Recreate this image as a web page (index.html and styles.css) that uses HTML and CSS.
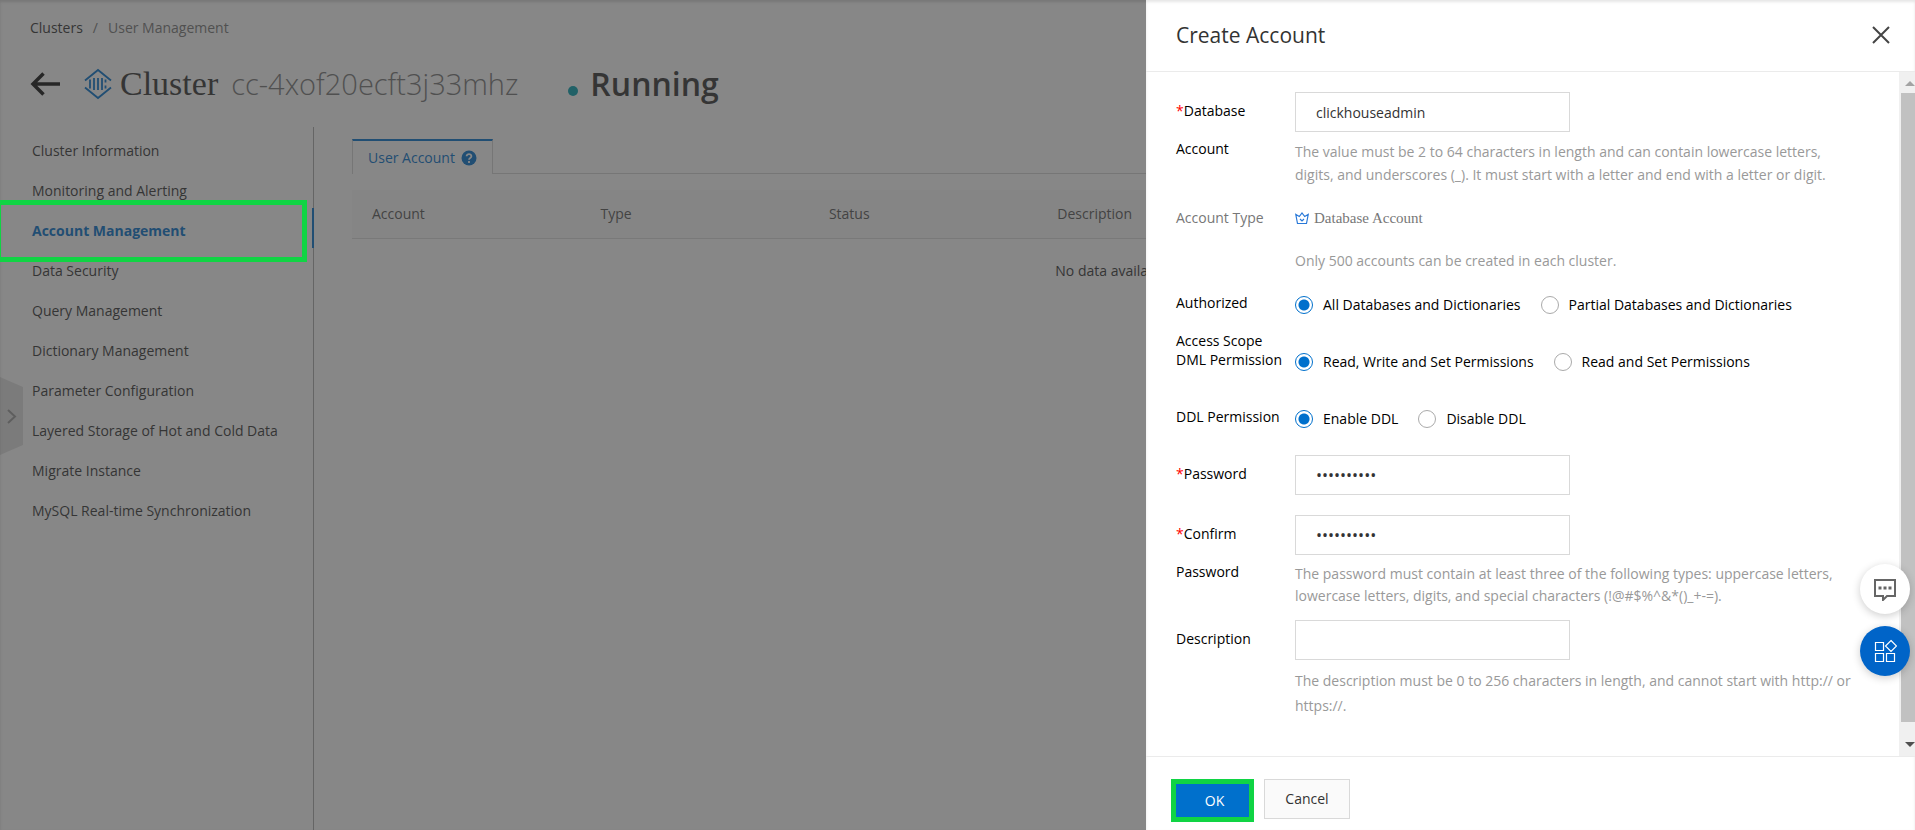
FILE: index.html
```
<!DOCTYPE html>
<html lang="en">
<head>
<meta charset="utf-8">
<title>Create Account</title>
<link rel="stylesheet" href="styles.css">
</head>
<body>
<div class="page">
  <nav class="breadcrumb" aria-label="Breadcrumb">
    <a href="#">Clusters</a><span class="sep">/</span><span class="current">User Management</span>
  </nav>
  <header class="title-bar">
    <a class="back" href="#" aria-label="Back">
      <svg width="30" height="24" viewBox="0 0 30 24"><path d="M30 12H3M13.500 1.500 3 12l10.500 10.500" fill="none" stroke="#111" stroke-width="3.500"/></svg>
    </a>
    <svg class="product" width="28" height="32" viewBox="0 0 28 32" fill="none" stroke="#0070cc" stroke-width="1.800"><path d="M1 12.500 14 2l13 10.500M1 19.500 14 30l13-10.500M6 11.500v9M10 10v12M14 10v12M18 10v12M21.500 11.500v3M21.500 17.500v3"/></svg>
    <span class="kind">Cluster</span>
    <span class="cluster-id">cc-4xof20ecft3j33mhz</span>
    <span class="dot"></span>
    <span class="status">Running</span>
  </header>
  <div class="columns">
    <nav class="side" aria-label="Cluster">
      <ul>
        <li><a href="#">Cluster Information</a></li>
        <li><a href="#">Monitoring and Alerting</a></li>
        <li class="active"><a href="#">Account Management</a></li>
        <li><a href="#">Data Security</a></li>
        <li><a href="#">Query Management</a></li>
        <li><a href="#">Dictionary Management</a></li>
        <li><a href="#">Parameter Configuration</a></li>
        <li><a href="#">Layered Storage of Hot and Cold Data</a></li>
        <li><a href="#">Migrate Instance</a></li>
        <li><a href="#">MySQL Real-time Synchronization</a></li>
      </ul>
    </nav>
    <main class="main">
      <div class="tabs">
        <a class="tab" href="#">User Account
          <svg width="16" height="16" viewBox="0 0 16 16"><circle cx="8" cy="8" r="7.500" fill="#0070cc"/><path d="M5.600 6.300C5.600 3.400 10.400 3.400 10.400 6.300 10.400 8 8 7.900 8 9.700M8 10.900v2" fill="none" stroke="#fff" stroke-width="1.800"/></svg>
        </a>
      </div>
      <table class="accounts">
        <thead><tr><th>Account</th><th>Type</th><th>Status</th><th>Description</th><td></td></tr></thead>
        <tbody><tr><td class="empty" colspan="5">No data available.</td></tr></tbody>
      </table>
    </main>
  </div>
  <button class="expand" type="button" aria-label="Expand menu">
    <svg width="23" height="78" viewBox="0 0 23 78"><path d="M0 0 23 10V68L0 78z" fill="#e2e2e2"/><path d="M8 33l7 6.500L8 46" fill="none" stroke="#999" stroke-width="2"/></svg>
  </button>
</div>
<div class="overlay"></div>
<form class="drawer" aria-label="Create Account">
  <div class="drawer-head">
    <h2>Create Account</h2>
    <button class="close" type="button" aria-label="Close">
      <svg width="18" height="18" viewBox="0 0 18 18"><path d="M1 1l16 16M17 1 1 17" stroke="#444" stroke-width="2"/></svg>
    </button>
  </div>
  <div class="drawer-body">
    <div class="fields">
      <div class="row">
        <label for="account"><i>*</i>Database<br>Account</label>
        <div>
          <input class="text" id="account" type="text" value="clickhouseadmin">
          <p class="help">The value must be 2 to 64 characters in length and can contain lowercase letters,<br>digits, and underscores (_). It must start with a letter and end with a letter or digit.</p>
        </div>
      </div>
      <div class="row type-row">
        <span class="muted">Account Type</span>
        <div>
          <span class="type"><svg width="14" height="13" viewBox="0 0 14 13" fill="none" stroke="#2878d8" stroke-width="1.200"><path d="M.8 2.500 2.500 11.500h9L13.200 2.500 9.700 4.500 7 1 4.300 4.500zM5 7l2 2 2-2"/></svg>Database Account</span>
          <p class="help">Only 500 accounts can be created in each cluster.</p>
        </div>
      </div>
      <div class="row choice" role="radiogroup" aria-labelledby="scope">
        <span id="scope">Authorized<br>Access Scope</span>
        <div class="options">
          <label><input type="radio" name="scope" checked>All Databases and Dictionaries</label>
          <label><input type="radio" name="scope">Partial Databases and Dictionaries</label>
        </div>
      </div>
      <div class="row choice" role="radiogroup" aria-labelledby="dml">
        <span id="dml">DML Permission</span>
        <div class="options">
          <label><input type="radio" name="dml" checked>Read, Write and Set Permissions</label>
          <label><input type="radio" name="dml">Read and Set Permissions</label>
        </div>
      </div>
      <div class="row choice" role="radiogroup" aria-labelledby="ddl">
        <span id="ddl">DDL Permission</span>
        <div class="options">
          <label><input type="radio" name="ddl" checked>Enable DDL</label>
          <label><input type="radio" name="ddl">Disable DDL</label>
        </div>
      </div>
      <div class="row password-row">
        <label for="password"><i>*</i>Password</label>
        <div><input class="text" id="password" type="password" value="Clickh0use"></div>
      </div>
      <div class="row">
        <label for="confirm"><i>*</i>Confirm<br>Password</label>
        <div>
          <input class="text" id="confirm" type="password" value="Clickh0use">
          <p class="help tight">The password must contain at least three of the following types: uppercase letters,<br>lowercase letters, digits, and special characters (!@#$%^&amp;*()_+-=).</p>
        </div>
      </div>
      <div class="row">
        <label for="description">Description</label>
        <div>
          <input class="text" id="description" type="text">
          <p class="help loose">The description must be 0 to 256 characters in length, and cannot start with http:// or<br>https://.</p>
        </div>
      </div>
    </div>
    <div class="scrollbar" aria-hidden="true">
      <svg width="10" height="5" viewBox="0 0 10 5"><path d="M0 5 5 0l5 5z" fill="#a3a3a3"/></svg>
      <span class="thumb"></span>
      <svg width="10" height="5" viewBox="0 0 10 5"><path d="M0 0h10L5 5z" fill="#505050"/></svg>
    </div>
  </div>
  <div class="drawer-foot">
    <button class="ok" type="submit">OK</button>
    <button class="cancel" type="button">Cancel</button>
  </div>
</form>
<div class="floating">
  <button class="round" type="button" aria-label="Feedback">
    <svg width="24" height="24" viewBox="0 0 24 24"><path d="M2 3h20v16h-8l-4 4v-4H2z" fill="none" stroke="#666" stroke-width="2"/><path d="M5.500 9.500h3v3h-3zM10.500 9.500h3v3h-3zM15.500 9.500h3v3h-3z" fill="#666"/></svg>
  </button>
  <button class="round blue" type="button" aria-label="Tools">
    <svg width="24" height="24" viewBox="0 0 24 24" fill="none" stroke="#fff" stroke-width="1.200"><path d="M2.500 3.500h8v8h-8zM2.500 14.500h8v8h-8zM13.500 14.500h8v8h-8zM18 1.500 23.500 7 18 12.500 12.500 7z"/></svg>
  </button>
</div>
</body>
</html>
```
FILE: styles.css
```
* { box-sizing: border-box; }
body {
  margin: 0;
  color: #000;
  background: #fff;
  font: 14px/20px "Open Sans", "Noto Sans", sans-serif;
  overflow: hidden;
}
a { color: inherit; text-decoration: none; }
button { padding: 0; border: 0; background: none; font: inherit; cursor: pointer; }
svg { display: block; flex: none; }

.page { display: flex; flex-direction: column; height: 100vh; color: #333; }
.breadcrumb { display: flex; gap: 10px; padding: 18px 30px 0; }
.breadcrumb .sep, .breadcrumb .current { color: #777; }
.title-bar { display: flex; align-items: center; height: 64px; margin-top: 14px; padding-left: 30px; line-height: 48px; white-space: nowrap; }
.product { margin: 0 8px 0 24px; }
.kind { font-family: "Liberation Serif", serif; font-size: 34px; }
.cluster-id { margin-left: 13px; color: #777; font-size: 29px; font-weight: 300; }
.dot { width: 10px; height: 10px; margin: 14px 12px 0 50px; border-radius: 50%; background: #00a0b0; }
.status { font-size: 32px; font-weight: 600; }

.columns { display: flex; flex: 1; margin-top: 11px; }
.side { width: 314px; border-right: 1px solid #aaa; }
.side ul { margin: 0; padding: 1px 0 0; list-style: none; }
.side li { position: relative; height: 40px; padding-left: 32px; line-height: 46px; }
.side .active { border-right: 2px solid #0070cc; margin-right: -1px; color: #0070cc; font-weight: 700; }
.side .active::after {
  content: "";
  position: absolute;
  z-index: 3;
  inset: -8px 5px -14px 0;
  border: 5px solid #10d444;
  border-left-width: 1px;
}
.main { flex: 1; padding: 12px 40px 0 38px; }
.tabs { display: flex; height: 35px; border-bottom: 1px solid #d4d4d4; }
.tab { display: flex; align-items: center; gap: 6px; height: 35px; padding: 0 15px; border: 1px solid #d4d4d4; border-width: 2px 1px 0; border-top-color: #0070cc; background: #fff; color: #0070cc; }
.accounts { width: 100%; margin-top: 16px; border-collapse: collapse; table-layout: fixed; }
.accounts th { width: 15%; padding: 0 20px; text-align: left; font-weight: 400; color: #555; }
.accounts thead tr { height: 48px; border-bottom: 1px solid #ddd; background: #fafafa; }
.accounts .empty { height: 66px; padding: 0; text-align: center; }
.expand { position: absolute; left: 0; top: 377px; }

.overlay { position: fixed; z-index: 2; inset: 0; background: rgba(55, 55, 55, .6); box-shadow: inset 0 2px 3px rgba(0, 0, 0, .12); }

.drawer { position: fixed; z-index: 4; top: 0; right: 0; bottom: 0; display: flex; flex-direction: column; width: 769px; max-width: 100%; background: #fff; box-shadow: inset 0 2px 3px rgba(0, 0, 0, .1); }
.drawer-head { display: flex; align-items: center; justify-content: space-between; height: 72px; padding: 0 25px 2px 30px; border-bottom: 1px solid #ebebeb; }
.drawer-head h2 { margin: 0; color: #333; font-size: 21px; font-weight: 400; line-height: 28px; }
.drawer-body { display: flex; flex: 1; min-height: 0; }
.fields { flex: 1; padding: 20px 24px 0 30px; }
.row { display: grid; grid-template-columns: 119px 1fr; margin-bottom: 13px; line-height: 38px; white-space: nowrap; }
.row i { color: #f00; font-style: normal; }
.muted, .type { color: #777; }
.text { display: block; width: 275px; height: 40px; padding: 0 20px; border: 1px solid #d9d9d9; border-radius: 0; color: #333; font: inherit; }
.text[type="password"] { font-size: 16px; }
.help { margin: 8px 0 0; color: #999; line-height: 23px; }
.help.tight { line-height: 22px; }
.help.loose { line-height: 25px; }
.type { display: flex; align-items: center; gap: 5px; font: 15px/38px "Liberation Serif", serif; }
.type-row { margin-bottom: 12px; }
.type-row .help { margin-top: 12px; }
.choice { height: 57px; margin: 0; }
.options { display: flex; gap: 20px; line-height: 42px; }
.options label { display: flex; align-items: center; gap: 10px; height: 42px; }
.options input { appearance: none; width: 18px; height: 18px; margin: 0; border: 1px solid #aaa; border-radius: 50%; }
.options input:checked { border-color: #0070cc; background: radial-gradient(circle, #0070cc 5px, #fff 6px); }
.password-row { margin-bottom: 20px; }
.scrollbar { display: flex; flex-direction: column; align-items: center; width: 16px; padding: 9px 0; background: #f0f0f0; }
.scrollbar svg { margin-left: 5px; }
.thumb { align-self: stretch; flex: 1; margin: 7px 0 20px 2px; background: #c1c1c1; }
.drawer-foot { display: flex; align-items: flex-start; gap: 10px; height: 74px; padding: 22px 25px 0; border-top: 1px solid #ebebeb; }
.ok { width: 83px; height: 43px; padding-left: 4px; border: 5px solid #10d444; background: #0070cc; color: #fff; }
.cancel { width: 86px; height: 40px; border: 1px solid #d9d9d9; background: #fafafa; color: #333; }

.floating { position: fixed; z-index: 5; right: 5px; bottom: 154px; display: flex; flex-direction: column; gap: 12px; }
.round { display: grid; place-items: center; width: 50px; height: 50px; border-radius: 50%; background: #fff; box-shadow: 0 2px 8px rgba(0, 0, 0, .2); }
.blue { background: #0064c8; }
```
